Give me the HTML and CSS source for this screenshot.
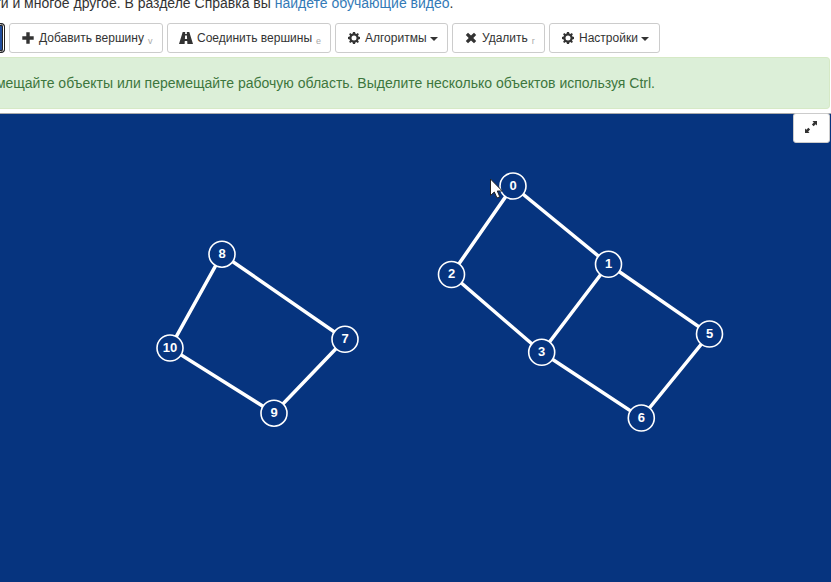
FILE: index.html
```html
<!DOCTYPE html>
<html lang="ru">
<head>
<meta charset="utf-8">
<title>Граф</title>
<link rel="stylesheet" href="styles.css">
</head>
<body>
<p class="intro"><span>ти и многое другое. В разделе Справка вы <a href="#">найдете обучающие видео</a>.</span></p>
<div class="toolbar">
  <button class="btn active" aria-label="Режим"></button>
  <button class="btn add"><svg class="icon" viewBox="0 0 12 12"><path d="M4.300 .3h3.400v4h4v3.400H7.700v4H4.300V7.700H.3V4.300h4z"/></svg><span>Добавить вершину</span><sub>v</sub></button>
  <button class="btn connect"><svg class="icon road" viewBox="0 0 14 12"><path fill-rule="evenodd" d="M3.700 0H6.200L6.100 2H7.900L7.800 0H10.300L14 12H8.400L8.200 9H5.800L5.600 12H0zM6.100 3.500L5.900 7H8.100L7.900 3.500z"/></svg><span>Соединить вершины</span><sub>e</sub></button>
  <button class="btn algorithms"><svg class="icon" viewBox="0 0 12 12"><path fill-rule="evenodd" d="M5 0h2l.4 1.600 1 .4L9.800 1.100 10.900 2.200 10 3.600l.4 1L12 5v2l-1.600.4-.4 1 .9 1.400-1.100 1.100L8.400 10l-1 .4L7 12H5l-.4-1.600-1-.4-1.400.9-1.100-1.100L2 8.400l-.4-1L0 7V5l1.600-.4.4-1-.9-1.400 1.100-1.100L3.600 2l1-.4zM6 3.500a2.500 2.500 0 1 0 0 5 2.500 2.500 0 0 0 0-5z"/></svg><span>Алгоритмы</span><i class="caret"></i></button>
  <button class="btn delete"><svg class="icon" viewBox="0 0 12 12"><path d="M3 .8L6 3.600 9 .8 11.200 3 8.300 6 11.200 9 9 11.200 6 8.400 3 11.200.8 9 3.700 6 .8 3z"/></svg><span>Удалить</span><sub>r</sub></button>
  <button class="btn settings"><svg class="icon" viewBox="0 0 12 12"><path fill-rule="evenodd" d="M5 0h2l.4 1.600 1 .4L9.800 1.100 10.900 2.200 10 3.600l.4 1L12 5v2l-1.600.4-.4 1 .9 1.400-1.100 1.100L8.400 10l-1 .4L7 12H5l-.4-1.600-1-.4-1.400.9-1.100-1.100L2 8.400l-.4-1L0 7V5l1.600-.4.4-1-.9-1.400 1.100-1.100L3.600 2l1-.4zM6 3.500a2.500 2.500 0 1 0 0 5 2.500 2.500 0 0 0 0-5z"/></svg><span>Настройки</span><i class="caret"></i></button>
</div>
<div class="alert"><span>мещайте объекты или перемещайте рабочую область. Выделите несколько объектов используя Ctrl.</span></div>
<main class="canvas">
  <svg class="graph" viewBox="0 114 831 468">
    <g class="edges">
      <path d="M513 186L451.500 274.500L541.700 352.300L608.500 264.300ZM608.500 264.300L709.500 334L641.300 418L541.700 352.300M222 254.200L345 339.300L274 413.200L170 348Z"/>
    </g>
    <g class="nodes">
      <circle cx="513" cy="186" r="13"/><circle cx="608.500" cy="264.300" r="13"/><circle cx="451.500" cy="274.500" r="13"/><circle cx="541.700" cy="352.300" r="13"/><circle cx="709.500" cy="334" r="13"/><circle cx="641.300" cy="418" r="13"/><circle cx="345" cy="339.300" r="13"/><circle cx="222" cy="254.200" r="13"/><circle cx="274" cy="413.200" r="13"/><circle cx="170" cy="348" r="13"/>
    </g>
    <g class="labels">
      <text x="513" y="190">0</text><text x="608.500" y="268">1</text><text x="451.500" y="278">2</text><text x="541.700" y="356">3</text><text x="709.500" y="338">5</text><text x="641.300" y="422">6</text><text x="345" y="343">7</text><text x="222" y="258">8</text><text x="274" y="417">9</text><text x="170" y="352">10</text>
    </g>
    <path class="cursor" d="M490.500 179V195.500L494.300 192L497 198L499.800 196.800L497.300 191H502.300Z"/>
  </svg>
  <button class="fullscreen" aria-label="На весь экран"><svg viewBox="0 0 12 12"><path d="M7.500 0H12v4.500L10.700 3.300 8.600 5.200 6.900 3.500 8.800 1.400zM0 7.500L1.300 8.700 3.400 6.800 5.100 8.500 3.200 10.600 4.500 12H0z"/></svg></button>
</main>
</body>
</html>
```
FILE: styles.css
```css
* { box-sizing: border-box; }
body {
  margin: 0;
  height: 582px;
  overflow: hidden;
  display: flex;
  flex-direction: column;
  background: #fff;
  color: #333;
  font: 14px/20px "Liberation Sans", Arial, sans-serif;
}
.intro {
  display: flex;
  justify-content: flex-end;
  width: 453.5px;
  height: 20px;
  margin: -7px 0 10px;
  white-space: nowrap;
}
.intro a { color: #337ab7; text-decoration: none; }
.toolbar { display: flex; gap: 4px; height: 30px; }
.btn {
  display: flex;
  align-items: center;
  flex: none;
  height: 30px;
  padding: 0 0 0 12px;
  border: 1px solid #ccc;
  border-radius: 3px;
  background: #fff;
  color: #333;
  font: 12px/18px "Liberation Sans", Arial, sans-serif;
  white-space: nowrap;
}
.icon { width: 12px; height: 12px; margin: -1px 5px 0 0; fill: #333; flex: none; }
.road { width: 14px; margin-right: 4px; }
.btn sub {
  margin: 6px 0 0 4px;
  color: #aaa;
  font-size: 9px;
  line-height: 9px;
}
.caret {
  margin: 1px 0 0 3px;
  border: 4px solid transparent;
  border-top-color: #333;
  border-bottom: 0;
}
.btn.active {
  width: 5px;
  padding: 0;
  border: 1px solid #222;
  border-left: 0;
  border-radius: 0 4px 4px 0;
  background: #204d9c;
  box-shadow: inset -1px 0 #fff, inset -2px 0 #222, inset 0 1px #fff, inset 0 -1px #fff, inset 0 2px #222, inset 0 -2px #222;
}
.add { width: 154px; }
.connect { width: 164px; padding-left: 11px; }
.algorithms { width: 113px; }
.delete { width: 93px; padding-left: 12px; }
.settings { width: 111px; }
.alert {
  display: flex;
  align-items: center;
  justify-content: flex-end;
  height: 52px;
  margin: 4px 1px 4px 0;
  padding-right: 174px;
  border: solid #d6e9c6;
  border-width: 1px 1px 1px 0;
  border-radius: 0 4px 4px 0;
  background: #dcefd8;
  color: #3c763d;
  white-space: nowrap;
}
.canvas {
  position: relative;
  flex: 1;
  border-top: 1px solid #aaa;
  background: #06347f;
}
.graph { display: block; width: 831px; height: 468px; }
.edges { fill: none; stroke: #fff; stroke-width: 3.5; }
.nodes { fill: #06347f; stroke: #fff; stroke-width: 1.6; }
.labels { fill: #fff; font-size: 13px; font-weight: bold; text-anchor: middle; }
.cursor { fill: #fff; stroke: #222; stroke-width: 1; }
.fullscreen {
  position: absolute;
  top: -1px;
  right: 1px;
  display: flex;
  align-items: center;
  justify-content: center;
  width: 37px;
  height: 30px;
  padding: 0 1px 2px 0;
  border: 1px solid #ccc;
  border-radius: 3px;
  background: #fff;
}
.fullscreen svg { width: 12px; height: 12px; fill: #333; }
```
